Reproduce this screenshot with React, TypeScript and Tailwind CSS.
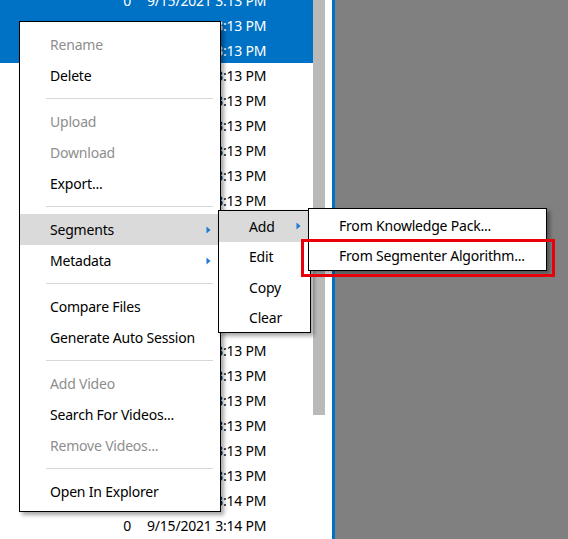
const rows = Array.from({ length: 23 }, (_, i) => ({
  time: i >= 20 ? '3:14 PM' : '3:13 PM',
  selected: i < 3,
}))

type Item = { label: string; disabled?: boolean; sub?: boolean; active?: boolean } | 'sep'

const mainItems: Item[] = [
  { label: 'Rename', disabled: true },
  { label: 'Delete' },
  'sep',
  { label: 'Upload', disabled: true },
  { label: 'Download', disabled: true },
  { label: 'Export...' },
  'sep',
  { label: 'Segments', sub: true, active: true },
  { label: 'Metadata', sub: true },
  'sep',
  { label: 'Compare Files' },
  { label: 'Generate Auto Session' },
  'sep',
  { label: 'Add Video', disabled: true },
  { label: 'Search For Videos...' },
  { label: 'Remove Videos...', disabled: true },
  'sep',
  { label: 'Open In Explorer' },
]

function Arrow() {
  return (
    <svg width="5" height="8" viewBox="0 0 5 8" className="shrink-0">
      <path d="M0.5 0.5 L4.5 4 L0.5 7.5 Z" fill="#1e78d6" />
    </svg>
  )
}

export default function App() {
  return (
    <div
      className="relative w-[568px] h-[539px] overflow-hidden flex bg-[#808080] text-[14px] tracking-[-0.2px]"
      style={{ fontFamily: '"Noto Sans", "Open Sans", sans-serif' }}
    >
      {/* file list */}
      <div className="w-[313px] h-full bg-white overflow-hidden">
        <div className="-mt-[12px]">
          {rows.map((r, i) => (
            <div
              key={i}
              className={`flex items-center h-[25px] ${r.selected ? 'bg-[#0072c6] text-white' : 'text-black'}`}
            >
              <span className="w-[131px] text-right">0</span>
              <span className="pl-[16px] whitespace-nowrap">9/15/2021 {r.time}</span>
            </div>
          ))}
        </div>
      </div>

      {/* scrollbar */}
      <div className="w-[12px] h-full bg-white">
        <div className="h-[415px] bg-[#b9b9b9]" />
      </div>
      <div className="w-[7px] h-full bg-white" />
      <div className="w-[3px] h-full bg-[#0072c6]" />
      <div className="flex-1 h-full bg-[#808080]" />

      {/* main context menu */}
      <div className="absolute left-[19px] top-[21px] w-[202px] h-[491px] bg-white border border-black pt-[7px] shadow-[3px_3px_4px_rgba(0,0,0,0.35)]">
        {mainItems.map((it, i) =>
          it === 'sep' ? (
            <div key={i} className="h-[15px] flex items-center pl-[26px] pr-[7px]">
              <div className="h-px w-full bg-[#d7d7d7]" />
            </div>
          ) : (
            <div
              key={i}
              className={`h-[31px] flex items-center pl-[30px] pr-[9px] ${it.active ? 'bg-[#dadada]' : ''} ${it.disabled ? 'text-[#8e8e8e]' : 'text-black'}`}
            >
              <span className="flex-1 whitespace-nowrap">{it.label}</span>
              {it.sub && <Arrow />}
            </div>
          ),
        )}
      </div>

      {/* segments submenu */}
      <div className="absolute left-[218px] top-[210px] w-[93px] h-[123px] bg-white border border-black shadow-[3px_3px_4px_rgba(0,0,0,0.35)]">
        <div className="h-[30.5px] flex items-center pl-[30px] pr-[9px] bg-[#dadada]">
          <span className="flex-1">Add</span>
          <Arrow />
        </div>
        {['Edit', 'Copy', 'Clear'].map((l) => (
          <div key={l} className="h-[30.5px] flex items-center pl-[30px]">
            {l}
          </div>
        ))}
      </div>

      {/* add submenu */}
      <div className="absolute left-[308px] top-[208px] w-[239px] h-[63px] bg-white border border-black pt-[1px] shadow-[3px_3px_4px_rgba(0,0,0,0.35)]">
        <div className="h-[30px] flex items-center pl-[30px] whitespace-nowrap">From Knowledge Pack...</div>
        <div className="h-[30px] flex items-center pl-[30px] whitespace-nowrap">From Segmenter Algorithm...</div>
      </div>

      {/* highlight box */}
      <div className="absolute left-[301px] top-[239px] w-[254px] h-[38px] border-[3px] border-[#e8000b]" />
    </div>
  )
}
